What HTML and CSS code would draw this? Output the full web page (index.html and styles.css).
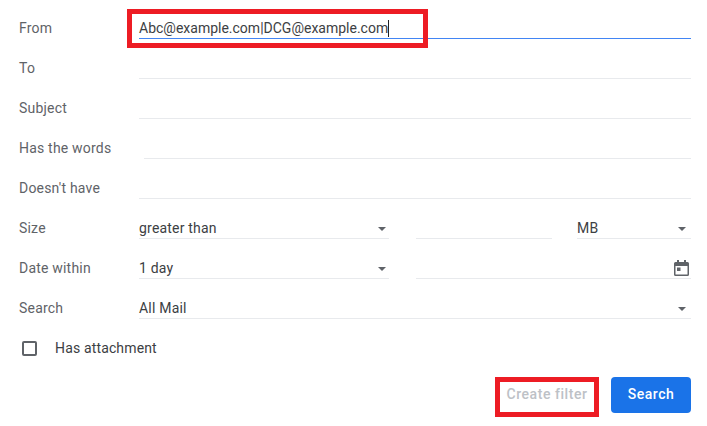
FILE: index.html
```html
<!DOCTYPE html>
<html lang="en">
<head>
    <meta charset="UTF-8">
    <title>Search filter</title>
    <link rel="stylesheet" href="styles.css">
</head>
<body>
    <form class="filter-form">
        <div class="row">
            <label class="row-label">From</label>
            <div class="field field-active">Abc@example.com|DCG@example.com<span class="caret"></span></div>
        </div>
        <div class="row">
            <label class="row-label">To</label>
            <div class="field"></div>
        </div>
        <div class="row">
            <label class="row-label">Subject</label>
            <div class="field"></div>
        </div>
        <div class="row">
            <label class="row-label row-label-wide">Has the words</label>
            <div class="field"></div>
        </div>
        <div class="row">
            <label class="row-label">Doesn't have</label>
            <div class="field"></div>
        </div>
        <div class="row">
            <label class="row-label">Size</label>
            <div class="field select select-left">greater than<span class="arrow"></span></div>
            <div class="field field-size"></div>
            <div class="field select select-unit">MB<span class="arrow"></span></div>
        </div>
        <div class="row">
            <label class="row-label">Date within</label>
            <div class="field select select-left">1 day<span class="arrow"></span></div>
            <div class="field field-date">
                <svg class="calendar" width="15" height="16" viewBox="0 0 15 16">
                    <path fill="#5f6368" d="M3 0h2v2h5V0h2v2h1.500A1.500 1.500 0 0 1 15 3.500v11a1.500 1.500 0 0 1-1.500 1.500h-12A1.500 1.500 0 0 1 0 14.500v-11A1.500 1.500 0 0 1 1.500 2H3zM1.500 6v8.500h12V6z"/>
                    <rect fill="#5f6368" x="3" y="7.500" width="3.500" height="3.500"/>
                </svg>
            </div>
        </div>
        <div class="row">
            <label class="row-label">Search</label>
            <div class="field select">All Mail<span class="arrow"></span></div>
        </div>
        <div class="row-check">
            <span class="checkbox"></span>
            <span class="check-label">Has attachment</span>
        </div>
        <div class="actions">
            <button type="button" class="btn-filter">Create filter</button>
            <button type="button" class="btn-search">Search</button>
        </div>
    </form>

    <!-- red annotation boxes on top of the screenshot -->
    <div class="mark mark-from"></div>
    <div class="mark mark-filter"></div>
</body>
</html>
```

FILE: styles.css
```css
body {
    margin: 0;
    background-color: #fff;
    font-family: Roboto, "Liberation Sans", sans-serif;
    font-size: 14px;
    color: #3c4043;
    overflow: hidden;
}

.filter-form {
    padding: 0 16px 0 19px;
}

.row {
    display: flex;
    align-items: flex-end;
    height: 40px;
}

.row-label {
    flex: 0 0 120px;
    height: 21px;
    margin-bottom: 1px;
    line-height: 20px;
    letter-spacing: 0.2px;
    color: #5f6368;
}

.row-label-wide {
    flex-basis: 125px;
}

.field {
    flex: 1;
    position: relative;
    display: flex;
    align-items: center;
    box-sizing: border-box;
    height: 21px;
    margin-bottom: 1px;
    border-bottom: 1px solid #e8eaed;
}

.field-active {
    border-bottom-color: #4285f4;
}

.caret {
    width: 1px;
    height: 17px;
    background-color: #202124;
}

.select {
    letter-spacing: 0.2px;
}

.select-left {
    flex: 0 0 250px;
    margin-right: 27px;
}

.field-size {
    flex: 0 0 136px;
    margin-right: 25px;
}

.select-unit {
    flex: 0 0 114px;
}

.arrow {
    position: absolute;
    right: 5px;
    top: 9px;
    border-left: 4px solid transparent;
    border-right: 4px solid transparent;
    border-top: 4px solid #5f6368;
}

.select-left .arrow {
    right: 3px;
}

.calendar {
    position: absolute;
    right: 2px;
    top: 2px;
}

.row-check {
    display: flex;
    align-items: center;
    height: 57px;
    padding-left: 3px;
}

.checkbox {
    width: 11px;
    height: 11px;
    border: 2px solid #5f6368;
    border-radius: 2px;
}

.check-label {
    margin-left: 18px;
    padding-bottom: 2px;
    letter-spacing: 0.15px;
}

.actions {
    display: flex;
    justify-content: flex-end;
    gap: 14px;
}

button {
    width: 100px;
    height: 36px;
    padding: 0 0 2px;
    border: none;
    border-radius: 4px;
    background: none;
    font-family: Roboto, "Liberation Sans", sans-serif;
    font-size: 14px;
    font-weight: 500;
    letter-spacing: 0.55px;
}

.btn-filter {
    color: #bdc1c6;
}

.btn-search {
    width: 80px;
    background-color: #1a73e8;
    color: #fff;
}

.mark {
    position: absolute;
    box-sizing: border-box;
    border: 5px solid #ed1c24;
}

.mark-from {
    left: 127px;
    top: 9px;
    width: 301px;
    height: 39px;
}

.mark-filter {
    left: 495px;
    top: 377px;
    width: 104px;
    height: 40px;
}
```
